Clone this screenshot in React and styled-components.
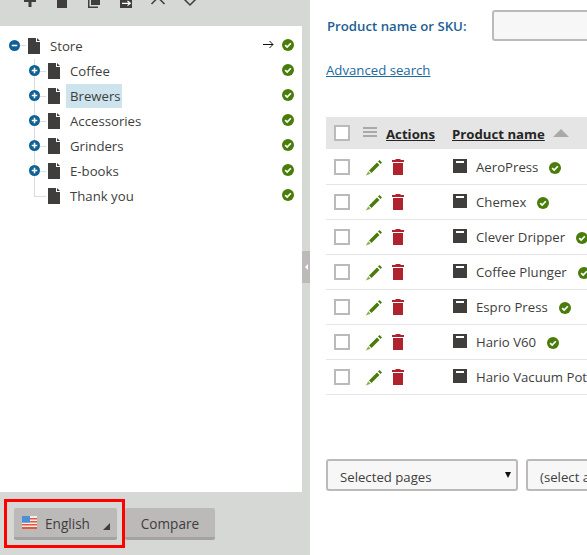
import React from "react";
import styled, { createGlobalStyle } from "styled-components";

const GlobalStyle = createGlobalStyle`
  html, body {
    margin: 0;
    height: 100%;
    overflow: hidden;
  }
  body {
    font-family: "Open Sans", "Noto Sans", sans-serif;
    font-size: 13.2px;
    color: #403e3d;
  }
`;

const Page = styled.div`
  display: flex;
  width: 587px;
  height: 555px;
  overflow: hidden;
  background: #fff;
`;

const Sidebar = styled.div`
  display: flex;
  flex-direction: column;
  width: 302px;
  flex: none;
  background: #d6d8d5;
`;

const Toolbar = styled.div`
  display: flex;
  align-items: flex-end;
  height: 26px;
  flex: none;
  overflow: hidden;
`;

const ToolIcon = styled.svg`
  display: block;
  flex: none;
  width: 16px;
  height: 16px;
  margin-left: ${(p) => p.$gap}px;
  margin-bottom: 18px;
  fill: #403e3d;
`;

const TreePanel = styled.div`
  flex: 1;
  background: #fff;
  padding-top: 7px;
`;

const TreeRow = styled.div`
  position: relative;
  display: flex;
  align-items: center;
  height: 25px;
  padding-left: ${(p) => (p.$root ? 9 : 29)}px;
  padding-right: 8px;
`;

const Toggle = styled.svg`
  display: block;
  flex: none;
  position: relative;
  z-index: 1;
  width: 11px;
  height: 11px;
  margin-right: 8px;
`;

const ToggleSpacer = styled.span`
  flex: none;
  width: 11px;
  margin-right: 8px;
`;

const Branch = styled.span`
  position: absolute;
  left: 34px;
  top: ${(p) => (p.$first ? 1 : -12)}px;
  height: ${(p) => (p.$first ? 12 : 25)}px;
  width: 11px;
  border-left: 1px solid #dcdcdc;
  border-bottom: 1px solid #dcdcdc;
`;

const RootStem = styled.span`
  position: absolute;
  left: 14px;
  top: 12px;
  width: 12px;
  border-top: 1px solid #dcdcdc;
`;

const DocIcon = styled.svg`
  display: block;
  flex: none;
  position: relative;
  width: 12px;
  height: 16px;
  margin-right: 6px;
`;

const NodeLabel = styled.span`
  display: flex;
  align-items: center;
  box-sizing: border-box;
  height: 24px;
  padding: 0 ${(p) => (p.$selected ? 1 : 4)}px 1px 4px;
  margin-top: 1px;
  background: ${(p) => (p.$selected ? "#cde4ee" : "transparent")};
`;

const Status = styled.span`
  display: flex;
  align-items: center;
  gap: 8px;
  margin-left: auto;
  margin-top: -2px;
`;

const ArrowIcon = styled.svg`
  display: block;
  width: 11px;
  height: 9px;
`;

const BottomBar = styled.div`
  display: flex;
  align-items: flex-start;
  height: 63px;
  flex: none;
  box-sizing: border-box;
  padding: 7px 0 0 4px;
`;

const Highlight = styled.div`
  box-sizing: border-box;
  width: 121px;
  height: 49px;
  border: 3px solid #f00;
  padding: 6px 7px;
`;

const GreyButton = styled.div`
  display: flex;
  align-items: center;
  box-sizing: border-box;
  height: 32px;
  padding-top: 2px;
  border-radius: 2px;
  background: #bcb9b9;
  border-bottom: 3px solid #a5a2a2;
  color: #403e3d;
  font-size: 13.6px;
  font-weight: 500;
`;

const LanguageButton = styled(GreyButton)`
  position: relative;
  width: 103px;
  padding-left: 8px;
`;

const Flag = styled.svg`
  display: block;
  flex: none;
  width: 15px;
  height: 13px;
  margin-right: 8px;
  margin-top: -3px;
`;

const Corner = styled.span`
  position: absolute;
  right: 7px;
  bottom: 7px;
  width: 0;
  height: 0;
  border-left: 7px solid transparent;
  border-bottom: 7px solid #403e3d;
`;

const CompareButton = styled(GreyButton)`
  justify-content: center;
  width: 90px;
  margin-top: 9px;
`;

const Splitter = styled.div`
  display: flex;
  align-items: center;
  justify-content: center;
  flex: none;
  width: 8px;
  background: #d6d8d5;
  box-sizing: border-box;
  padding-bottom: 21px;
`;

const SplitHandle = styled.div`
  display: flex;
  align-items: center;
  justify-content: center;
  width: 8px;
  height: 32px;
  background: #bcb9b9;
  &::before {
    content: "";
    border-top: 3px solid transparent;
    border-bottom: 3px solid transparent;
    border-right: 3px solid #fff;
  }
`;

const Content = styled.div`
  flex: none;
  width: 600px;
  padding-left: 16px;
`;

const SearchRow = styled.div`
  display: flex;
  align-items: center;
  height: 31px;
  margin-top: 10px;
`;

const SearchLabel = styled.label`
  width: 165px;
  margin-left: 1px;
  flex: none;
  color: #1c5f94;
  font-weight: 600;
`;

const SearchInput = styled.div`
  box-sizing: border-box;
  width: 200px;
  height: 31px;
  border: 2px solid #bcb9b9;
  border-radius: 3px;
  background: #f7f7f7;
`;

const AdvancedLink = styled.a`
  display: block;
  margin-top: 19px;
  line-height: 20px;
  color: #1c6aa0;
  text-decoration: underline;
`;

const Table = styled.div`
  margin-top: 37px;
`;

const HeaderRow = styled.div`
  display: flex;
  align-items: center;
  height: 32px;
  margin-bottom: 1px;
  background: #e5e5e5;
`;

const Row = styled.div`
  display: flex;
  align-items: center;
  height: 34px;
  border-bottom: 1px solid #e5e5e5;
`;

const CheckBox = styled.span`
  flex: none;
  box-sizing: border-box;
  width: 16px;
  height: 16px;
  margin-left: 8px;
  background: #fff;
  border: 2px solid #bcb9b9;
`;

const MenuIcon = styled.svg`
  display: block;
  flex: none;
  width: 14px;
  height: 11px;
  margin-left: 13px;
  margin-top: -2px;
`;

const HeaderLink = styled.span`
  flex: none;
  padding-top: 1px;
  color: #262524;
  font-weight: 700;
  text-decoration: underline;
  margin-left: ${(p) => p.$gap}px;
`;

const SortArrow = styled.span`
  flex: none;
  margin-left: 8px;
  width: 0;
  height: 0;
  border-left: 8px solid transparent;
  border-right: 8px solid transparent;
  border-bottom: 8px solid #a9a9a9;
`;

const ActionIcon = styled.svg`
  display: block;
  flex: none;
`;

const Pencil = styled(ActionIcon)`
  width: 17px;
  height: 17px;
  margin-left: 15px;
`;

const Trash = styled(ActionIcon)`
  width: 12px;
  height: 16px;
  margin-left: 10px;
`;

const BookIcon = styled.svg`
  display: block;
  flex: none;
  width: 14px;
  height: 14px;
  margin-left: 49px;
  margin-top: -3px;
`;

const ProductName = styled.span`
  flex: none;
  margin-left: 9px;
  margin-right: 11px;
  color: #403e3d;
`;

const CheckWrap = styled.span`
  display: flex;
  flex: none;
  margin-top: 1px;
`;

const Footer = styled.div`
  display: flex;
  gap: 8px;
  margin-top: 64px;
`;

const Select = styled.div`
  position: relative;
  display: flex;
  align-items: center;
  box-sizing: border-box;
  width: ${(p) => p.$width}px;
  height: 32px;
  padding: 3px 0 0 12px;
  border: 2px solid #bcb9b9;
  border-radius: 3px;
  background: #f7f7f7;
  color: #403e3d;
`;

const SelectCaret = styled.span`
  position: absolute;
  right: 5px;
  top: 11px;
  width: 0;
  height: 0;
  border-left: 3px solid transparent;
  border-right: 3px solid transparent;
  border-top: 6px solid #111;
`;

const CheckIcon = () => (
  <svg width="12" height="12" viewBox="0 0 13 13" style={{ display: "block" }}>
    <circle cx="6.5" cy="6.5" r="6.5" fill="#497c0b" />
    <path d="M3.4 6.7l2.2 2.100 4-4.200" fill="none" stroke="#fff" strokeWidth="1.900" />
  </svg>
);

const ToggleIcon = ({ open }) => (
  <Toggle viewBox="0 0 12 12">
    <circle cx="6" cy="6" r="6" fill="#0f6194" />
    <path d={open ? "M3 6h6" : "M3 6h6M6 3v6"} stroke="#fff" strokeWidth="1.700" />
  </Toggle>
);

const Doc = () => (
  <DocIcon viewBox="0 0 12 16">
    <path d="M0 0h8v4h4v12H0z" fill="#403e3d" />
    <path d="M9 0l3 3H9z" fill="#403e3d" />
  </DocIcon>
);

const treeNodes = [
  { name: "Coffee", first: true },
  { name: "Brewers", selected: true },
  { name: "Accessories" },
  { name: "Grinders" },
  { name: "E-books" },
  { name: "Thank you", leaf: true },
];

const products = [
  "AeroPress",
  "Chemex",
  "Clever Dripper",
  "Coffee Plunger",
  "Espro Press",
  "Hario V60",
  "Hario Vacuum Pot",
];

const App = () => {
  return (
    <Page>
      <GlobalStyle />
      <Sidebar>
        <Toolbar>
          <ToolIcon $gap={22} viewBox="0 0 16 16">
            <path d="M6.500 2h3v6H14v2H9.500v5h-3v-5H2V8h4.500z" />
          </ToolIcon>
          <ToolIcon $gap={16} viewBox="0 0 16 16">
            <path d="M3 0h10v16H3z" />
          </ToolIcon>
          <ToolIcon $gap={16} viewBox="0 0 16 16">
            <path d="M5 0h9v13H5z" />
            <path d="M2 3v13h10v-1.500H3.500V3z" />
          </ToolIcon>
          <ToolIcon $gap={16} viewBox="0 0 16 16">
            <path d="M2 0h12v17H2z" />
            <path d="M4 11.300h8M9.500 9l2.800 2.300-2.800 2.300" fill="none" stroke="#fff" strokeWidth="1.200" />
          </ToolIcon>
          <ToolIcon $gap={16} viewBox="0 0 16 16">
            <path d="M1.500 12L8 5.500 14.500 12" fill="none" stroke="#403e3d" strokeWidth="1.500" />
          </ToolIcon>
          <ToolIcon $gap={16} viewBox="0 0 16 16">
            <path d="M1.500 6.500L8 13l6.500-6.500" fill="none" stroke="#403e3d" strokeWidth="1.500" />
          </ToolIcon>
        </Toolbar>

        <TreePanel>
          <TreeRow $root>
            <RootStem />
            <ToggleIcon open />
            <Doc />
            <NodeLabel>Store</NodeLabel>
            <Status>
              <ArrowIcon viewBox="0 0 11 9">
                <path d="M0 4.500h10M6.500 1l3.500 3.500L6.500 8" fill="none" stroke="#111" />
              </ArrowIcon>
              <CheckIcon />
            </Status>
          </TreeRow>
          {treeNodes.map((node) => (
            <TreeRow key={node.name}>
              <Branch $first={node.first} />
              {node.leaf ? <ToggleSpacer /> : <ToggleIcon />}
              <Doc />
              <NodeLabel $selected={node.selected}>{node.name}</NodeLabel>
              <Status>
                <CheckIcon />
              </Status>
            </TreeRow>
          ))}
        </TreePanel>

        <BottomBar>
          <Highlight>
            <LanguageButton>
              <Flag viewBox="0 0 15 13">
                <rect width="15" height="13" fill="#f4f0ec" />
                <path d="M0 2h15v1.500H0zM0 5h15v1.500H0zM0 8h15v1.500H0zM0 11h15v2H0z" fill="#e2583e" />
                <rect width="8" height="6.500" fill="#4a90d9" />
              </Flag>
              English
              <Corner />
            </LanguageButton>
          </Highlight>
          <CompareButton>Compare</CompareButton>
        </BottomBar>
      </Sidebar>

      <Splitter>
        <SplitHandle />
      </Splitter>

      <Content>
        <SearchRow>
          <SearchLabel>Product name or SKU:</SearchLabel>
          <SearchInput />
        </SearchRow>
        <AdvancedLink>Advanced search</AdvancedLink>

        <Table>
          <HeaderRow>
            <CheckBox />
            <MenuIcon viewBox="0 0 14 11">
              <path d="M0 0h14v2H0zM0 4h14v2H0zM0 8h14v2H0z" fill="#a9a9a9" />
            </MenuIcon>
            <HeaderLink $gap={9}>Actions</HeaderLink>
            <HeaderLink $gap={17}>Product name</HeaderLink>
            <SortArrow />
          </HeaderRow>
          {products.map((name) => (
            <Row key={name}>
              <CheckBox />
              <Pencil viewBox="0 0 17 17">
                <path d="M4 11.500L12 3.500l2.500 2.500-8 8z" fill="#497c0b" />
                <path d="M13 2.500l1.500-1.500L17 3.500 15.500 5z" fill="#497c0b" />
                <path d="M3.300 12.300l2.400 2.400L.8 16.500z" fill="#8fae5a" />
              </Pencil>
              <Trash viewBox="0 0 12 16">
                <path d="M3.500 0h5v1H12v2H0V1h3.500zM1 4h10v12H1z" fill="#b0232e" />
              </Trash>
              <BookIcon viewBox="0 0 14 14">
                <path d="M0 0h14v14H0z" fill="#403e3d" />
                <path d="M3 2h8v2H3z" fill="#fff" />
              </BookIcon>
              <ProductName>{name}</ProductName>
              <CheckWrap>
                <CheckIcon />
              </CheckWrap>
            </Row>
          ))}
        </Table>

        <Footer>
          <Select $width={192}>
            Selected pages
            <SelectCaret />
          </Select>
          <Select $width={200}>(select action)</Select>
        </Footer>
      </Content>
    </Page>
  );
};

export default App;
